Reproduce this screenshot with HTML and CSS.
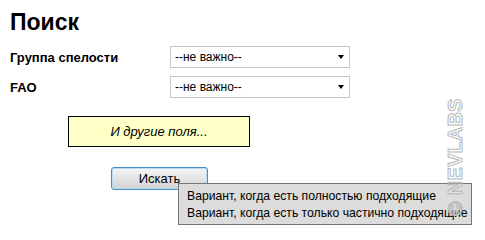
FILE: index.html
```html
<!DOCTYPE html>
<html lang="ru">
<head>
<meta charset="utf-8">
<link rel="stylesheet" href="styles.css">
</head>
<body>
<div class="page">
  <h1 class="title">Поиск</h1>
  <div class="fields">
    <label class="label">Группа спелости</label>
    <span class="select-wrap"><select class="select"><option>--не важно--</option></select></span>
    <label class="label">FAO</label>
    <span class="select-wrap"><select class="select"><option>--не важно--</option></select></span>
  </div>
  <div class="other">И другие поля...</div>
  <div class="actions">
    <button class="btn" type="button">Искать</button>
    <div class="tooltip">
      <div>Вариант, когда есть полностью подходящие</div>
      <div>Вариант, когда есть только частично подходящие</div>
    </div>
  </div>
  <div class="watermark">© NEVLABS</div>
</div>
</body>
</html>
```
FILE: styles.css
```css
html, body {
  margin: 0;
  padding: 0;
  background: #fff;
}
.page {
  position: relative;
  width: 485px;
  height: 240px;
  padding: 9px 0 0 10px;
  box-sizing: border-box;
  font-family: "Liberation Sans", Arial, sans-serif;
  color: #000;
  overflow: hidden;
}
.title {
  margin: 0;
  font-size: 23px;
  line-height: 26px;
  font-weight: bold;
}
.fields {
  display: grid;
  grid-template-columns: 160px 180px;
  row-gap: 8px;
  margin-top: 11px;
  align-items: center;
}
.label {
  font-size: 13px;
  font-weight: bold;
}
.select-wrap {
  position: relative;
  display: block;
  height: 22px;
}
.select {
  appearance: none;
  -webkit-appearance: none;
  display: block;
  width: 180px;
  height: 22px;
  margin: 0;
  padding: 0 0 0 4px;
  border: 1px solid #c8c8c8;
  border-radius: 0;
  background: #fff;
  font-family: "Liberation Sans", Arial, sans-serif;
  font-size: 12px;
  color: #000;
}
.select-wrap::after {
  content: "";
  position: absolute;
  right: 6px;
  top: 9px;
  border-left: 3.5px solid transparent;
  border-right: 3.5px solid transparent;
  border-top: 4px solid #000;
  pointer-events: none;
}
.other {
  margin: 18px 0 0 58px;
  width: 180px;
  height: 29px;
  border: 1px solid #000;
  background: #ffffc8;
  display: flex;
  align-items: center;
  justify-content: center;
  font-size: 13px;
  font-style: italic;
}
.actions {
  position: relative;
  margin: 20px 0 0 101px;
  height: 40px;
}
.btn {
  display: block;
  width: 97px;
  height: 23px;
  padding: 0;
  border: 1px solid #4a8cc4;
  border-radius: 3px;
  background: linear-gradient(#f6f6f6, #e4e4e4 50%, #d2d2d2);
  box-shadow: inset 0 0 0 1px #bcdcf2;
  font-family: "Liberation Sans", Arial, sans-serif;
  font-size: 13px;
  color: #000;
}
.tooltip {
  position: absolute;
  left: 67px;
  top: 16px;
  width: 294px;
  height: 42px;
  box-sizing: border-box;
  border: 1px solid #767676;
  background: #dcdcdc;
  padding: 4px 0 0 8px;
  font-size: 12.2px;
  line-height: 17px;
  white-space: nowrap;
}
.watermark {
  position: absolute;
  left: 455px;
  top: 157px;
  transform: translate(-50%, -50%) rotate(-90deg);
  font-family: "Liberation Sans", Arial, sans-serif;
  font-size: 19.5px;
  font-weight: bold;
  color: rgba(255,255,255,0.3);
  -webkit-text-stroke: 1px #b8b8b8;
  white-space: nowrap;
  letter-spacing: 0.5px;
}
```
